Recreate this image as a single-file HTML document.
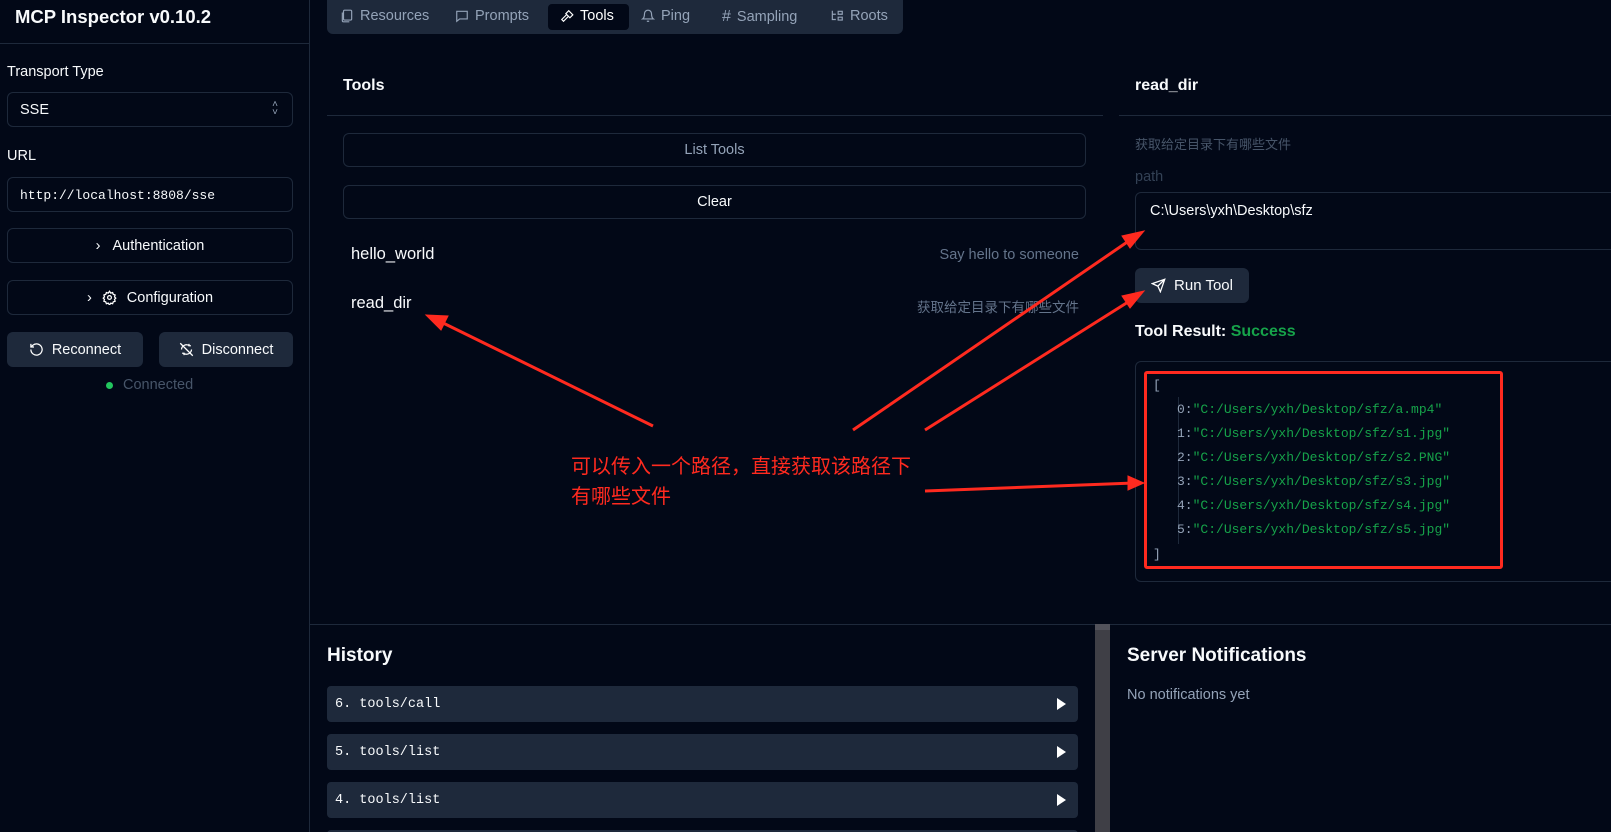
<!DOCTYPE html>
<html style="overflow:hidden;height:832px"><head><meta charset="utf-8"><style>
*{box-sizing:border-box;margin:0;padding:0}
body{width:1611px;height:832px;background:#020817;color:#f8fafc;font-family:"Liberation Sans","Noto Sans CJK SC",sans-serif;font-size:14.5px;position:relative;overflow:hidden}
.a{position:absolute;white-space:nowrap}
.bd{border:1px solid #1e293b;border-radius:6px}
.btn{background:#1e293b;border-radius:6px;display:flex;align-items:center;justify-content:center;gap:8px}
.mono{font-family:"Liberation Mono",monospace}
.hl{position:absolute;height:1px;background:#1e293b}
.hist{position:absolute;left:327px;width:751px;height:36px;background:#1e293b;border-radius:4px;font-family:"Liberation Mono",monospace;font-size:13.5px;padding:11px 8px}
.hist:after{content:"";position:absolute;right:12px;top:12px;border-left:9px solid #fff;border-top:6px solid transparent;border-bottom:6px solid transparent}
.jl{position:absolute;left:1177px;font-family:"Liberation Mono",monospace;font-size:13px;color:#94a3b8;white-space:nowrap}
.jl b{font-weight:normal;color:#16a34a}
svg{display:block}
.tab{position:absolute;top:8px;white-space:nowrap;display:flex;align-items:center;gap:6px;color:#94a3b8}
</style></head><body>
<div class="a" style="left:309px;top:0;width:1px;height:832px;background:#1e293b"></div>
<div class="a" style="left:15px;top:6px;font-size:18.5px;font-weight:bold">MCP Inspector v0.10.2</div>
<div class="hl" style="left:0;top:43px;width:309px"></div>
<div class="a" style="left:7px;top:64px">Transport Type</div>
<div class="a bd" style="left:7px;top:92px;width:286px;height:35px;padding:9px 12px">SSE<span style="position:absolute;right:14px;top:8px;color:#94a3b8;font-size:10px;line-height:8px">˄<br>˅</span></div>
<div class="a" style="left:7px;top:148px">URL</div>
<div class="a bd mono" style="left:7px;top:177px;width:286px;height:35px;padding:10px 12px;font-size:13px">http://localhost:8808/sse</div>
<div class="a bd" style="left:7px;top:228px;width:286px;height:35px;display:flex;align-items:center;justify-content:center;gap:12px"><span>›</span>Authentication</div>
<div class="a bd" style="left:7px;top:280px;width:286px;height:35px;display:flex;align-items:center;justify-content:center;gap:10px"><span>›</span><svg width="15" height="15" viewBox="0 0 24 24" fill="none" stroke="#fff" stroke-width="2"><circle cx="12" cy="12" r="3"/><path d="M12 2l2 3 3-1 1 3 3 1-1 3 2 2-2 2 1 3-3 1-1 3-3-1-2 3-2-3-3 1-1-3-3-1 1-3-2-2 2-2-1-3 3-1 1-3 3 1z"/></svg>Configuration</div>
<div class="a btn" style="left:7px;top:332px;width:136px;height:35px"><svg width="15" height="15" viewBox="0 0 24 24" fill="none" stroke="#fff" stroke-width="2"><path d="M3 12a9 9 0 1 0 3-6.7L3 8M3 3v5h5"/></svg>Reconnect</div>
<div class="a btn" style="left:159px;top:332px;width:134px;height:35px"><svg width="15" height="15" viewBox="0 0 24 24" fill="none" stroke="#fff" stroke-width="2"><path d="M2 2l20 20M4 12a8 8 0 0 1 12-6.5M20 12a8 8 0 0 1-12 6.5M16 3v3h3M8 21v-3H5"/></svg>Disconnect</div>
<div class="a" style="left:106px;top:382px;width:7px;height:7px;border-radius:50%;background:#22c55e"></div>
<div class="a" style="left:123px;top:377px;color:#475569">Connected</div>
<!-- tabs -->
<div class="a" style="left:327px;top:0;width:576px;height:34px;background:#1e293b;border-radius:0 0 6px 6px"></div>
<div class="a" style="left:548px;top:4px;width:81px;height:26px;background:#020817;border-radius:4px"></div>
<div class="tab" style="left:340px"><svg width="14" height="14" viewBox="0 0 24 24" fill="none" stroke="#94a3b8" stroke-width="2"><rect x="6" y="2" width="14" height="17" rx="2"/><path d="M4 6v14a2 2 0 0 0 2 2h10"/></svg>Resources</div>
<div class="tab" style="left:455px"><svg width="14" height="14" viewBox="0 0 24 24" fill="none" stroke="#94a3b8" stroke-width="2"><path d="M3 4h18v13H8l-5 4z"/></svg>Prompts</div>
<div class="tab" style="left:560px;color:#fff"><svg width="14" height="14" viewBox="0 0 24 24" fill="none" stroke="#fff" stroke-width="2"><path d="M15 12l-9 9-3-3 9-9M17 15l5-5-7-7-5 5z"/></svg>Tools</div>
<div class="tab" style="left:641px"><svg width="14" height="14" viewBox="0 0 24 24" fill="none" stroke="#94a3b8" stroke-width="2"><path d="M6 8a6 6 0 0 1 12 0c0 7 3 9 3 9H3s3-2 3-9M10 21h4"/></svg>Ping</div>
<div class="tab" style="left:722px"><span style="font-size:16px">#</span>Sampling</div>
<div class="tab" style="left:830px"><svg width="14" height="14" viewBox="0 0 24 24" fill="none" stroke="#94a3b8" stroke-width="2"><path d="M4 3v15h6M4 9h6M14 4h7v5h-7zM14 14h7v5h-7z"/></svg>Roots</div>
<!-- tools panel -->
<div class="a" style="left:343px;top:77px;font-weight:bold;font-size:16px">Tools</div>
<div class="hl" style="left:327px;top:115px;width:776px"></div>
<div class="a bd" style="left:343px;top:133px;width:743px;height:34px;display:flex;align-items:center;justify-content:center;color:#94a3b8">List Tools</div>
<div class="a bd" style="left:343px;top:185px;width:743px;height:34px;display:flex;align-items:center;justify-content:center">Clear</div>
<div class="a" style="left:351px;top:245px;font-size:16.5px">hello_world</div>
<div class="a" style="right:532px;top:247px;color:#64748b">Say hello to someone</div>
<div class="a" style="left:351px;top:294px;font-size:16.5px">read_dir</div>
<div class="a" style="right:532px;top:296px;color:#64748b;font-size:13.5px">获取给定目录下有哪些文件</div>
<!-- right panel -->
<div class="a" style="left:1135px;top:77px;font-weight:bold;font-size:16px">read_dir</div>
<div class="hl" style="left:1119px;top:115px;width:492px"></div>
<div class="a" style="left:1135px;top:134px;color:#475569;font-size:13px">获取给定目录下有哪些文件</div>
<div class="a" style="left:1135px;top:169px;color:#334155;font-size:14.5px">path</div>
<div class="a bd" style="left:1135px;top:192px;width:500px;height:58px;padding:10px 14px">C:\Users\yxh\Desktop\sfz</div>
<div class="a btn" style="left:1135px;top:268px;width:114px;height:35px;font-size:15px"><svg width="15" height="15" viewBox="0 0 24 24" fill="none" stroke="#fff" stroke-width="2"><path d="M22 2L11 13M22 2l-7 20-4-9-9-4z"/></svg>Run Tool</div>
<div class="a" style="left:1135px;top:323px;font-weight:bold;font-size:16px">Tool Result: <span style="color:#16a34a">Success</span></div>
<div class="a bd" style="left:1135px;top:361px;width:500px;height:221px"></div>
<div class="a" style="left:1178px;top:397px;width:1px;height:147px;background:#1e293b"></div>
<div class="jl" style="left:1153px;top:378px">[</div>
<div class="jl" style="top:402px">0:<b>"C:/Users/yxh/Desktop/sfz/a.mp4"</b></div>
<div class="jl" style="top:426px">1:<b>"C:/Users/yxh/Desktop/sfz/s1.jpg"</b></div>
<div class="jl" style="top:450px">2:<b>"C:/Users/yxh/Desktop/sfz/s2.PNG"</b></div>
<div class="jl" style="top:474px">3:<b>"C:/Users/yxh/Desktop/sfz/s3.jpg"</b></div>
<div class="jl" style="top:498px">4:<b>"C:/Users/yxh/Desktop/sfz/s4.jpg"</b></div>
<div class="jl" style="top:522px">5:<b>"C:/Users/yxh/Desktop/sfz/s5.jpg"</b></div>
<div class="jl" style="left:1153px;top:547px">]</div>
<div class="a" style="left:1144px;top:371px;width:359px;height:198px;border:3px solid #ff2a1f;border-radius:3px"></div>
<!-- bottom -->
<div class="hl" style="left:310px;top:624px;width:1301px"></div>
<div class="a" style="left:1095px;top:624px;width:15px;height:208px;background:#3f3f46"></div>
<div class="a" style="left:1095px;top:624px;width:15px;height:6px;background:#52525b"></div>
<div class="a" style="left:327px;top:645px;font-weight:bold;font-size:19px">History</div>
<div class="hist" style="top:686px">6. tools/call</div>
<div class="hist" style="top:734px">5. tools/list</div>
<div class="hist" style="top:782px">4. tools/list</div>
<div class="hist" style="top:830px"></div>
<div class="a" style="left:1127px;top:645px;font-weight:bold;font-size:19px">Server Notifications</div>
<div class="a" style="left:1127px;top:687px;color:#94a3b8">No notifications yet</div>
<!-- annotation -->
<div class="a" style="left:571px;top:450px;color:#ff2a1f;font-size:20px;line-height:30px;font-family:'Noto Sans CJK SC',sans-serif">可以传入一个路径，直接获取该路径下<br>有哪些文件</div>
<svg class="a" style="left:0;top:0" width="1611" height="832"><g stroke="#ff2a1f" stroke-width="3" fill="#ff2a1f">
<line x1="653" y1="426" x2="435" y2="319"/><polygon points="426,315 448,316 441,330" stroke-width="1"/>
<line x1="853" y1="430" x2="1136" y2="236"/><polygon points="1144,231 1130,248 1122,236" stroke-width="1"/>
<line x1="925" y1="430" x2="1136" y2="297"/><polygon points="1144,291 1130,308 1122,296" stroke-width="1"/>
<line x1="925" y1="491" x2="1134" y2="483"/><polygon points="1144,483 1128,490 1128,476" stroke-width="1"/>
</g></svg>
</body></html>
